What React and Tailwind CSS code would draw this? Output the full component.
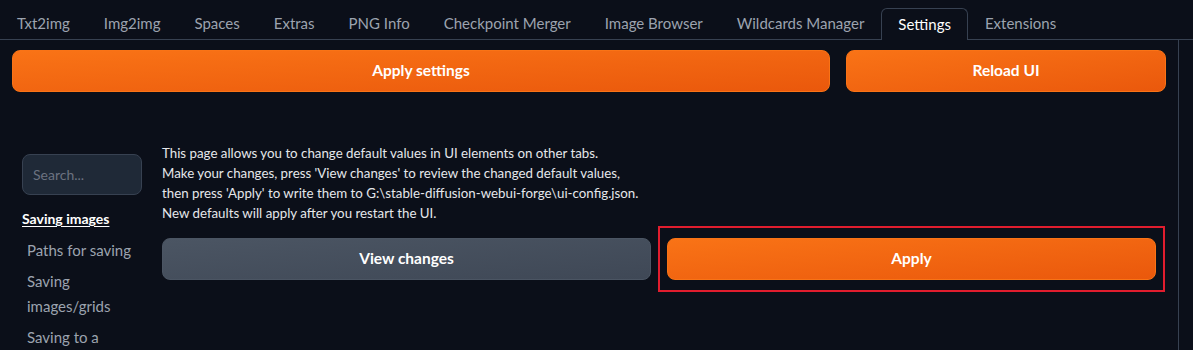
import React from 'react'

const tabs = [
  'Txt2img',
  'Img2img',
  'Spaces',
  'Extras',
  'PNG Info',
  'Checkpoint Merger',
  'Image Browser',
  'Wildcards Manager',
  'Settings',
  'Extensions',
]

const sections = ['Paths for saving', 'Saving images/grids', 'Saving to a directory']

function OrangeButton({ children, className = '' }) {
  return (
    <button
      className={`h-[42px] rounded-lg border border-[#f97316] bg-linear-to-br from-[#f97316] to-[#ea580c] text-[15.5px] font-bold text-white ${className}`}
    >
      {children}
    </button>
  )
}

export default function App() {
  return (
    <div className="h-[350px] overflow-hidden bg-[#0b0f19] font-['Lato',sans-serif] text-white">
      {/* tab strip */}
      <div className="flex border-b border-[#374151] pt-2">
        {tabs.map((tab) => {
          const active = tab === 'Settings'
          return (
            <div
              key={tab}
              className={
                active
                  ? '-mb-px flex h-[32px] items-center rounded-t-md border border-b-0 border-[#374151] bg-[#0b0f19] px-4 text-[15px] text-white'
                  : 'flex h-[31px] items-center border border-transparent px-4 text-[15px] text-[#9ca3af]'
              }
            >
              {tab}
            </div>
          )
        })}
      </div>

      <div className="mr-[14px] h-[310px] border-r border-[#374151]">
        {/* top actions */}
        <div className="flex gap-4 px-3 pt-[10px]">
          <OrangeButton className="flex-1">Apply settings</OrangeButton>
          <OrangeButton className="w-[320px]">Reload UI</OrangeButton>
        </div>

        <div className="mt-[51px] flex pl-[22px]">
          {/* sidebar */}
          <div className="w-[140px] shrink-0 pt-[11px]">
            <div className="flex h-[41px] w-[120px] items-center rounded-lg border border-[#374151] bg-[#1f2937] px-[10px] text-[14px] text-[#6b7280]">
              Search...
            </div>
            <div className="mt-3 text-[14px] font-bold leading-6 text-white underline underline-offset-2">
              Saving images
            </div>
            <div className="mt-[7px] flex w-[118px] flex-col gap-[6px] pl-[5px]">
              {sections.map((s) => (
                <div key={s} className="text-[15px] leading-[25px] text-[#9ca3af]">
                  {s}
                </div>
              ))}
            </div>
          </div>

          {/* main */}
          <div className="w-[994px]">
            <div className="text-[13.3px] leading-[20px] text-[#e5e7eb]">
              <p>This page allows you to change default values in UI elements on other tabs.</p>
              <p>Make your changes, press 'View changes' to review the changed default values,</p>
              <p>then press 'Apply' to write them to G:\stable-diffusion-webui-forge\ui-config.json.</p>
              <p>New defaults will apply after you restart the UI.</p>
            </div>
            <div className="mt-[15px] grid grid-cols-2 gap-4">
              <button className="h-[42px] rounded-lg border border-[#4b5563] bg-linear-to-br from-[#4b5563] to-[#3f4856] text-[15.5px] font-bold text-white">
                View changes
              </button>
              <div className="relative">
                <OrangeButton className="w-full">Apply</OrangeButton>
                <div className="pointer-events-none absolute -inset-x-[9px] -inset-y-[12px] border-2 border-[#e11d2e]" />
              </div>
            </div>
          </div>
        </div>
      </div>
    </div>
  )
}
